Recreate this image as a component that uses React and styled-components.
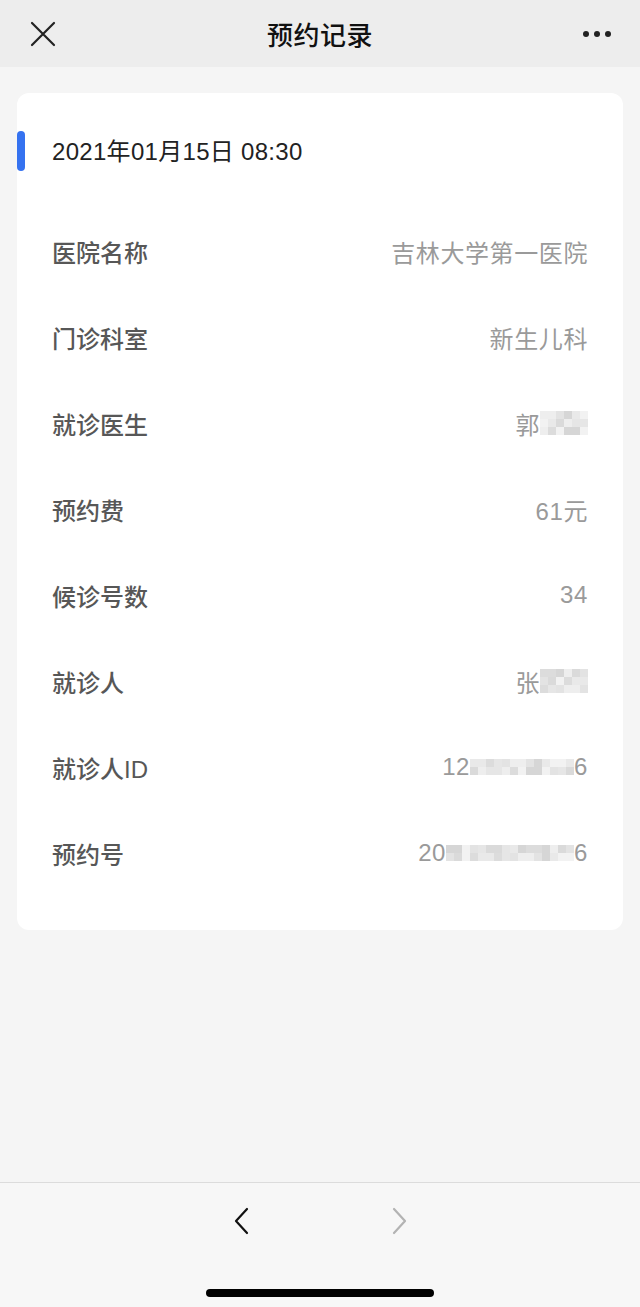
import React from "react";
import styled, { createGlobalStyle } from "styled-components";

const GlobalStyle = createGlobalStyle`
  html, body {
    margin: 0;
    padding: 0;
    background: #f5f5f5;
  }
  body {
    font-family: "Liberation Sans", "Noto Sans CJK SC", sans-serif;
  }
`;

const Page = styled.div`
  display: flex;
  flex-direction: column;
  min-height: 100vh;
  background: #f5f5f5;
`;

const Header = styled.div`
  display: flex;
  align-items: center;
  justify-content: space-between;
  height: 67px;
  padding: 0 28px;
  background: #ededed;
  box-sizing: border-box;
`;

const HeaderIcon = styled.div`
  display: flex;
  align-items: center;
  justify-content: center;
  width: 30px;
  height: 30px;
`;

const Title = styled.div`
  font-size: 26px;
  font-weight: 500;
  color: #111;
  letter-spacing: 0.5px;
`;

const Main = styled.div`
  flex: 1;
  padding: 26px 17px 0;
`;

const Card = styled.div`
  background: #fff;
  border-radius: 12px;
  padding: 38px 35px 34px 0;
`;

const DateRow = styled.div`
  display: flex;
  align-items: center;
  height: 40px;
`;

const Bar = styled.div`
  width: 8px;
  height: 40px;
  border-radius: 4px;
  background: #3572f0;
`;

const DateText = styled.div`
  margin: 0 0 3px 27px;
  font-size: 24px;
  color: #222;
  letter-spacing: 0.3px;
`;

const List = styled.div`
  margin-top: 37px;
  padding-left: 35px;
`;

const Row = styled.div`
  display: flex;
  align-items: center;
  justify-content: space-between;
  height: 86px;
`;

const Label = styled.div`
  font-size: 24px;
  font-weight: 500;
  color: #575757;
`;

const Value = styled.div`
  display: flex;
  align-items: center;
  font-size: 24px;
  color: #9a9a9a;
  letter-spacing: 0.6px;
`;

const Mosaic = styled.span`
  display: grid;
  grid-template-columns: repeat(${(p) => p.cols}, 8px);
  grid-auto-rows: ${(p) => p.cell}px;
`;

const Cell = styled.span`
  display: block;
  background: ${(p) => p.shade};
`;

const BottomBar = styled.div`
  display: flex;
  flex-direction: column;
  align-items: center;
  height: 125px;
  background: #f7f7f7;
  border-top: 1px solid #dcdcdc;
  box-sizing: border-box;
`;

const NavRow = styled.div`
  display: flex;
  gap: 117px;
  margin-top: 18px;
`;

const NavButton = styled.div`
  display: flex;
  align-items: center;
  justify-content: center;
  width: 40px;
  height: 40px;
`;

const HomeIndicator = styled.div`
  width: 228px;
  height: 8px;
  border-radius: 4px;
  background: #000;
  margin-top: 48px;
`;

const shades = ["#e6e6e6", "#dcdcdc", "#eeeeee", "#d6d6d6", "#e3e3e3", "#f2f2f2", "#dadada", "#e9e9e9"];

function Blur({ cols, rows = 3, cell = 8, seed = 1 }) {
  const cells = [];
  for (let i = 0; i < cols * rows; i++) {
    const k = (i * 7 + seed * 13 + ((i * i) % 5)) % shades.length;
    cells.push(<Cell key={i} shade={shades[k]} />);
  }
  return (
    <Mosaic cols={cols} cell={cell}>
      {cells}
    </Mosaic>
  );
}

const rows = [
  { label: "医院名称", value: "吉林大学第一医院" },
  { label: "门诊科室", value: "新生儿科" },
  { label: "就诊医生", value: <>郭<Blur cols={6} seed={2} /></> },
  { label: "预约费", value: "61元" },
  { label: "候诊号数", value: "34" },
  { label: "就诊人", value: <>张<Blur cols={6} seed={5} /></> },
  { label: "就诊人ID", value: <>12<Blur cols={13} rows={2} seed={3} />6</> },
  { label: "预约号", value: <>20<Blur cols={16} rows={2} seed={7} />6</> },
];

export default function App() {
  return (
    <Page>
      <GlobalStyle />
      <Header>
        <HeaderIcon>
          <svg width="26" height="26" viewBox="0 0 26 26">
            <path d="M2 2 L24 24 M24 2 L2 24" stroke="#222" strokeWidth="2.2" strokeLinecap="round" />
          </svg>
        </HeaderIcon>
        <Title>预约记录</Title>
        <HeaderIcon>
          <svg width="30" height="8" viewBox="0 0 30 8">
            <circle cx="4" cy="4" r="3" fill="#222" />
            <circle cx="15" cy="4" r="3" fill="#222" />
            <circle cx="26" cy="4" r="3" fill="#222" />
          </svg>
        </HeaderIcon>
      </Header>
      <Main>
        <Card>
          <DateRow>
            <Bar />
            <DateText>2021年01月15日 08:30</DateText>
          </DateRow>
          <List>
            {rows.map((r) => (
              <Row key={r.label}>
                <Label>{r.label}</Label>
                <Value>{r.value}</Value>
              </Row>
            ))}
          </List>
        </Card>
      </Main>
      <BottomBar>
        <NavRow>
          <NavButton>
            <svg width="16" height="28" viewBox="0 0 16 28">
              <path d="M13 2 L2 14 L13 26" fill="none" stroke="#111" strokeWidth="2.2" strokeLinecap="round" strokeLinejoin="round" />
            </svg>
          </NavButton>
          <NavButton>
            <svg width="16" height="28" viewBox="0 0 16 28">
              <path d="M3 2 L14 14 L3 26" fill="none" stroke="#b3b3b3" strokeWidth="2.2" strokeLinecap="round" strokeLinejoin="round" />
            </svg>
          </NavButton>
        </NavRow>
        <HomeIndicator />
      </BottomBar>
    </Page>
  );
}
